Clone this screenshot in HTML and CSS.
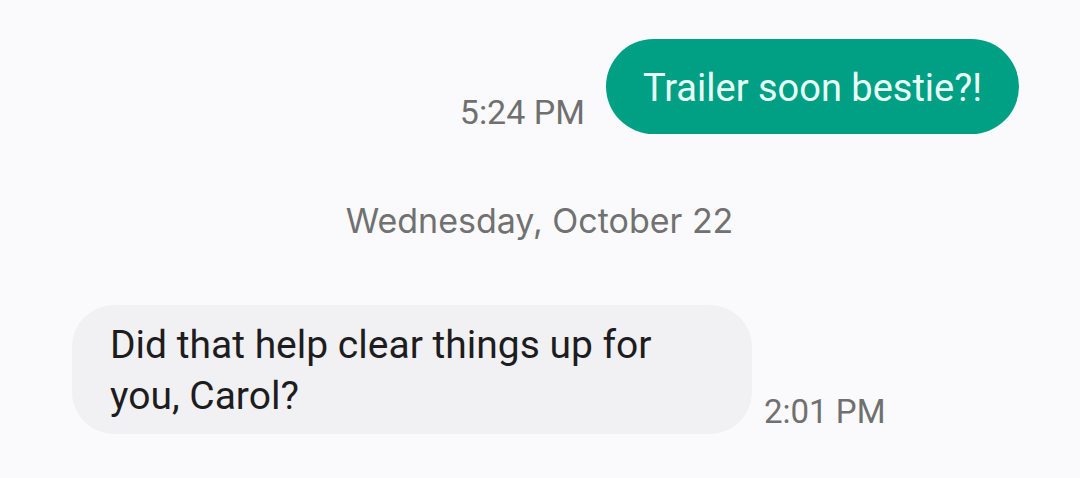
FILE: index.html
```html
<!DOCTYPE html>
<html lang="en">
<head>
<meta charset="utf-8">
<title>Messages</title>
<link rel="stylesheet" href="styles.css">
</head>
<body>
<main class="thread">
  <div class="row row-out">
    <span class="stamp stamp-out">5:24 PM</span>
    <div class="bubble bubble-out">Trailer soon bestie?!</div>
  </div>
  <div class="date-divider">Wednesday, October 22</div>
  <div class="row row-in">
    <div class="bubble bubble-in">Did that help clear things up for you, Carol?</div>
    <span class="stamp stamp-in">2:01 PM</span>
  </div>
</main>
</body>
</html>
```

FILE: styles.css
```css
html, body {
  margin: 0;
  padding: 0;
  background: #fafafc;
}

body {
  font-family: Roboto, "Noto Sans", "Liberation Sans", sans-serif;
  width: 1080px;
  height: 478px;
  overflow: hidden;
}

.thread {
  display: flex;
  flex-direction: column;
  padding: 39px 61px 0 72px;
}

.row {
  display: flex;
  align-items: flex-end;
}

.row-out {
  justify-content: flex-end;
  gap: 21px;
}

.row-in {
  justify-content: flex-start;
  gap: 12px;
  margin-top: 64px;
}

.stamp {
  font-size: 33px;
  line-height: 44px;
  color: #707070;
  white-space: nowrap;
}

.stamp-out {
  font-size: 34px;
}

.bubble-out {
  background: #01a085;
  color: #e8fff6;
  font-size: 38px;
  border-radius: 48px;
  padding: 4px 37px 0;
  line-height: 91px;
  height: 95px;
  box-sizing: border-box;
  white-space: nowrap;
}

.bubble-in {
  background: #f1f1f3;
  color: #1d1d1f;
  font-size: 39px;
  line-height: 51px;
  border-radius: 42px;
  padding: 15px 38px 12px;
  width: 680px;
  box-sizing: border-box;
}

.date-divider {
  align-self: center;
  font-family: Inter, Roboto, "Liberation Sans", sans-serif;
  font-size: 34px;
  line-height: 40px;
  color: #717171;
  margin-top: 67px;
  margin-left: -12px;
}
```
